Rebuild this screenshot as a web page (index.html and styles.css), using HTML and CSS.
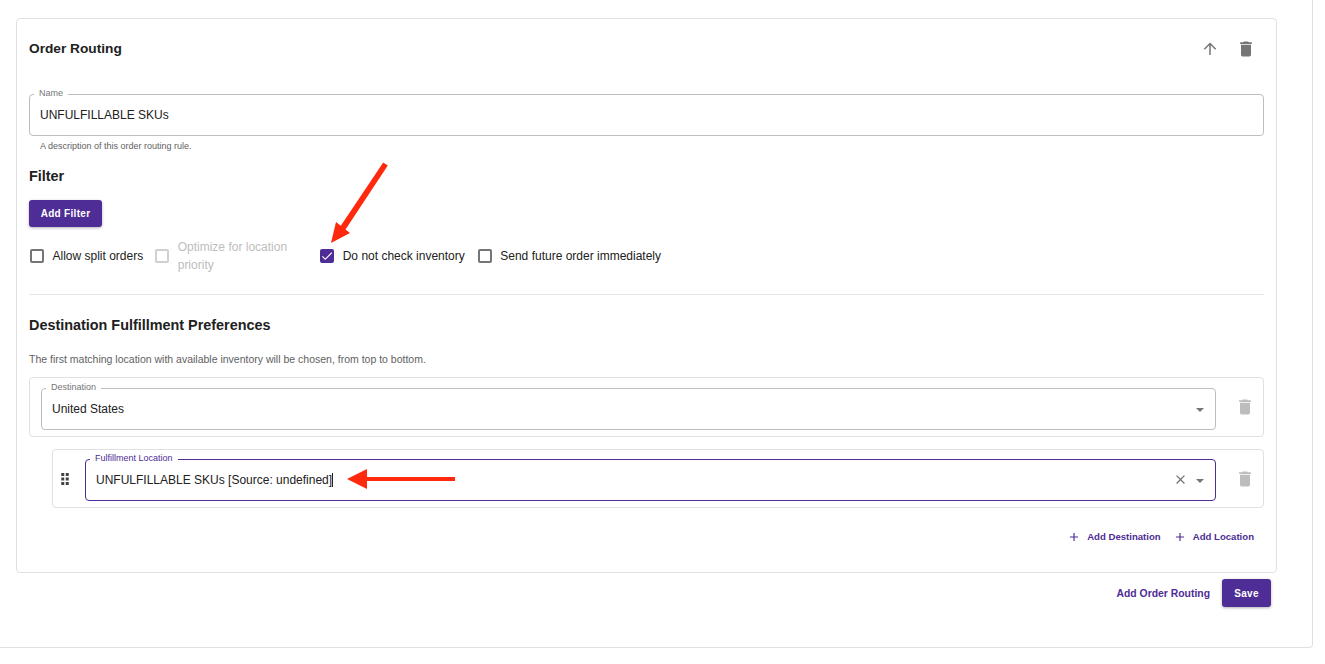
FILE: index.html
```html
<!DOCTYPE html>
<html lang="en">
<head>
<meta charset="utf-8">
<title>Order Routing</title>
<link rel="stylesheet" href="styles.css">
</head>
<body>
<div class="page">
  <section class="card">
    <header class="card-head">
      <h2 class="title order-title">Order Routing</h2>
      <div class="head-icons">
        <svg class="icon arrow-up" viewBox="0 0 20 20"><path d="M10 16V4.500M4.300 10.200L10 4.500l5.700 5.700"/></svg>
        <svg class="icon icon-dark" viewBox="0 0 24 24"><path d="M6 19c0 1.100.9 2 2 2h8c1.100 0 2-.9 2-2V7H6v12zM19 4h-3.500l-1-1h-5l-1 1H5v2h14V4z"/></svg>
      </div>
    </header>
    <div class="field name-field">
      <span class="legend">Name</span>
      <span class="value">UNFULFILLABLE SKUs</span>
    </div>
    <p class="helper">A description of this order routing rule.</p>
    <h3 class="title filter-title">Filter</h3>
    <button class="btn add-filter">Add Filter</button>
    <div class="checks">
      <label class="check"><span class="box"></span><span>Allow split orders</span></label>
      <label class="check disabled opt"><span class="box"></span><span>Optimize for location priority</span></label>
      <label class="check"><span class="box on"><svg viewBox="0 0 24 24"><path d="M9 16.170L4.830 12l-1.420 1.410L9 19 21 7l-1.410-1.410z"/></svg></span><span>Do not check inventory</span></label>
      <label class="check"><span class="box"></span><span>Send future order immediately</span></label>
    </div>
    <hr class="rule">
    <h3 class="title dest-title">Destination Fulfillment Preferences</h3>
    <p class="desc">The first matching location with available inventory will be chosen, from top to bottom.</p>
    <div class="group">
      <div class="field select">
        <span class="legend">Destination</span>
        <span class="value">United States</span>
        <span class="caret"></span>
      </div>
      <svg class="icon icon-light" viewBox="0 0 24 24"><path d="M6 19c0 1.100.9 2 2 2h8c1.100 0 2-.9 2-2V7H6v12zM19 4h-3.500l-1-1h-5l-1 1H5v2h14V4z"/></svg>
    </div>
    <div class="group nested">
      <svg class="drag" viewBox="0 0 24 24"><path d="M7 4h4v4H7zM13 4h4v4h-4zM7 10h4v4H7zM13 10h4v4h-4zM7 16h4v4H7zM13 16h4v4h-4z"/></svg>
      <div class="field select focused">
        <span class="legend">Fulfillment Location</span>
        <span class="value">UNFULFILLABLE SKUs [Source: undefined]<i class="cursor"></i></span>
        <svg class="clear" viewBox="0 0 24 24"><path d="M19 6.410L17.590 5 12 10.590 6.410 5 5 6.410 10.590 12 5 17.590 6.410 19 12 13.410 17.590 19 19 17.590 13.410 12z"/></svg>
        <span class="caret"></span>
      </div>
      <svg class="icon icon-light" viewBox="0 0 24 24"><path d="M6 19c0 1.100.9 2 2 2h8c1.100 0 2-.9 2-2V7H6v12zM19 4h-3.500l-1-1h-5l-1 1H5v2h14V4z"/></svg>
    </div>
    <div class="add-row">
      <span class="link"><svg class="plus" viewBox="0 0 24 24"><path d="M19 13h-6v6h-2v-6H5v-2h6V5h2v6h6v2z"/></svg>Add Destination</span>
      <span class="link"><svg class="plus" viewBox="0 0 24 24"><path d="M19 13h-6v6h-2v-6H5v-2h6V5h2v6h6v2z"/></svg>Add Location</span>
    </div>
  </section>
  <footer class="foot">
    <span class="link foot-link">Add Order Routing</span>
    <button class="btn save">Save</button>
  </footer>
</div>
<svg class="annot annot-a" viewBox="0 0 60 86"><path d="M53.200 2.500L57.800 5.500L15.500 69.500L20 73L1 83L6 62L10.800 65.800z"/></svg>
<svg class="annot annot-b" viewBox="0 0 110 22"><path d="M1 11L21 1V9H109V13H21V21z"/></svg>
</body>
</html>
```
FILE: styles.css
```css
* { box-sizing: border-box; }
html, body { margin: 0; padding: 0; background: #fff; }
body { font-family: "Liberation Sans", Arial, sans-serif; color: #212121; height: 664px; overflow: hidden; position: relative; }
.page { width: 1313px; height: 648px; border-right: 1px solid #e0e0e0; border-bottom: 1px solid #e0e0e0; border-bottom-right-radius: 4px; padding: 18px 35px 0 16px; }
.card { width: 1261px; height: 555px; border: 1px solid #e0e0e0; border-radius: 4px; padding: 0 12px; }
.card-head { height: 75px; display: flex; justify-content: space-between; align-items: flex-start; padding: 19px 0 0; }
.title { margin: 0; font-weight: 700; font-size: 14.400px; line-height: 20px; color: #212121; }
.order-title { font-size: 13.700px; padding-top: 1px; }
.head-icons { display: flex; gap: 16px; padding: 1px 8px 0 0; }
.icon { width: 20px; height: 20px; display: block; flex: none; }
.arrow-up { fill: none; stroke: #757575; stroke-width: 1.500; }
.icon-dark { fill: #757575; }
.icon-light { fill: #bdbdbd; }
.field { position: relative; border: 1px solid #bdbdbd; border-radius: 4px; display: flex; align-items: center; }
.legend { position: absolute; top: -7px; left: 4px; padding: 0 5px; background: #fff; font-size: 9px; line-height: 11px; color: #757575; }
.value { font-size: 12px; line-height: 16px; color: #212121; }
.name-field { height: 42px; padding-left: 10px; }
.helper { margin: 4px 0 0 11px; font-size: 9px; line-height: 12px; color: #616161; }
.filter-title { margin-top: 14px; }
.btn { display: block; border: 0; border-radius: 3px; background: #4e2d96; color: #fff; font-family: "Liberation Sans", Arial, sans-serif; font-weight: 700; font-size: 10px; letter-spacing: .3px; box-shadow: 0 1px 3px rgba(0,0,0,.3); padding: 0; }
.add-filter { width: 73px; height: 27px; margin-top: 14px; padding-bottom: 1px; }
.checks { display: flex; align-items: center; margin-top: 7px; height: 44px; }
.check { display: flex; align-items: center; gap: 8.500px; font-size: 12px; line-height: 18px; color: #212121; margin-left: 1px; margin-right: 12px; white-space: nowrap; }
.box { width: 14px; height: 14px; border: 2px solid #757575; border-radius: 2px; flex: none; display: block; }
.box.on { background: #4e2d96; border-color: #4e2d96; }
.box.on svg { display: block; width: 14px; height: 14px; margin: -2px; fill: #fff; }
.disabled { color: #bdbdbd; }
.disabled .box { border-color: #d0d0d0; }
.opt { white-space: normal; width: 155px; margin-left: 0; margin-right: 9px; }
.rule { border: 0; border-top: 1px solid #e8e8e8; margin: 16px 0 0; }
.dest-title { margin-top: 20px; }
.desc { margin: 17px 0 0; font-size: 10.500px; line-height: 14px; color: #616161; }
.group { display: flex; align-items: center; margin-top: 11px; height: 60px; border: 1px solid #e0e0e0; border-radius: 4px; padding: 0 8px 0 11px; gap: 19px; }
.select { flex: 1; height: 42px; padding-left: 10px; margin-top: 4px; }
.select .caret { position: absolute; right: 11px; top: 19px; width: 0; height: 0; border-left: 4px solid transparent; border-right: 4px solid transparent; border-top: 4px solid #757575; }
.group.nested { margin: 12px 0 0 23px; height: 59px; padding-left: 3px; gap: 19px; }
.nested .select { margin-top: 2px; }
.drag { width: 18px; height: 18px; fill: #424242; flex: none; margin-right: -8px; }
.focused { border-color: #4e2d96; }
.focused .legend { color: #4e2d96; }
.cursor { display: inline-block; width: 1px; height: 14px; background: #212121; vertical-align: -3px; }
.clear { position: absolute; right: 27px; top: 12px; width: 15px; height: 15px; fill: #757575; }
.add-row { display: flex; justify-content: flex-end; gap: 12px; padding: 22px 10px 0 0; }
.link { display: flex; align-items: center; font-family: "Liberation Sans", Arial, sans-serif; font-weight: 700; font-size: 9.600px; line-height: 12px; color: #4e2d96; }
.plus { width: 14px; height: 14px; fill: #4e2d96; margin-right: 6px; }
.foot { display: flex; justify-content: flex-end; align-items: center; gap: 12px; width: 1255px; margin-top: 6px; }
.foot-link { font-size: 10.400px; padding-top: 2px; }
.save { width: 49px; height: 28px; padding-top: 1px; }
.annot { position: absolute; display: block; fill: #ff2a0d; }
.annot-a { left: 330px; top: 160px; width: 60px; height: 86px; }
.annot-b { left: 346px; top: 468px; width: 110px; height: 22px; }
```
